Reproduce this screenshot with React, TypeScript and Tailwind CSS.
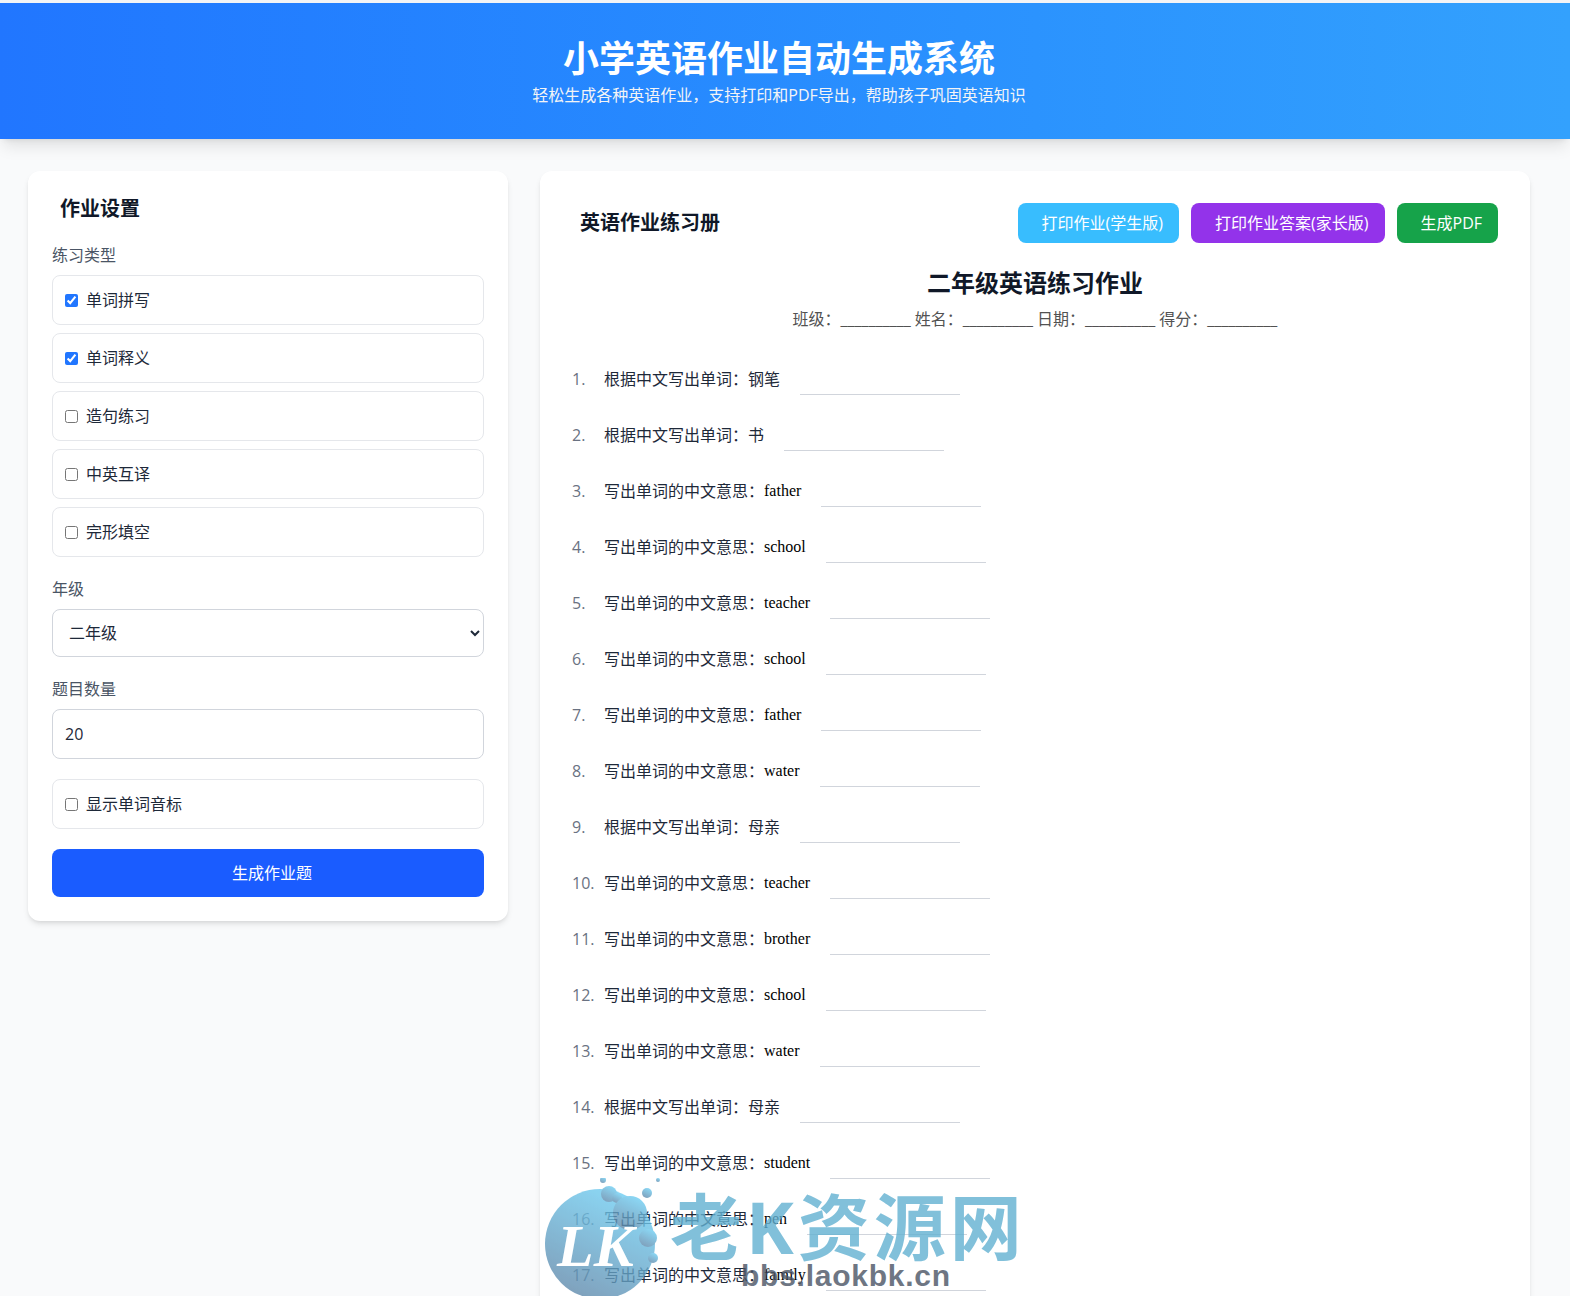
const font = { fontFamily: '"Open Sans", "Noto Sans CJK SC", sans-serif' };

const types = [
  { name: "单词拼写", checked: true },
  { name: "单词释义", checked: true },
  { name: "造句练习", checked: false },
  { name: "中英互译", checked: false },
  { name: "完形填空", checked: false },
];

const questions: { prompt: string; word: string; en: boolean }[] = [
  { prompt: "根据中文写出单词：", word: "钢笔", en: false },
  { prompt: "根据中文写出单词：", word: "书", en: false },
  { prompt: "写出单词的中文意思：", word: "father", en: true },
  { prompt: "写出单词的中文意思：", word: "school", en: true },
  { prompt: "写出单词的中文意思：", word: "teacher", en: true },
  { prompt: "写出单词的中文意思：", word: "school", en: true },
  { prompt: "写出单词的中文意思：", word: "father", en: true },
  { prompt: "写出单词的中文意思：", word: "water", en: true },
  { prompt: "根据中文写出单词：", word: "母亲", en: false },
  { prompt: "写出单词的中文意思：", word: "teacher", en: true },
  { prompt: "写出单词的中文意思：", word: "brother", en: true },
  { prompt: "写出单词的中文意思：", word: "school", en: true },
  { prompt: "写出单词的中文意思：", word: "water", en: true },
  { prompt: "根据中文写出单词：", word: "母亲", en: false },
  { prompt: "写出单词的中文意思：", word: "student", en: true },
  { prompt: "写出单词的中文意思：", word: "pen", en: true },
  { prompt: "写出单词的中文意思：", word: "family", en: true },
];

function CheckRow({ name, checked }: { name: string; checked: boolean }) {
  return (
    <label className="flex items-center gap-2 rounded-lg border border-gray-200 bg-white px-3 py-3 text-gray-800">
      <input type="checkbox" defaultChecked={checked} className="accent-[#2176ff]" />
      {name}
    </label>
  );
}

function SettingsPanel() {
  return (
    <aside className="w-120 shrink-0 self-start rounded-xl bg-white p-6 shadow-md">
      <h2 className="mb-5 ml-2 text-xl font-bold text-gray-900">作业设置</h2>

      <p className="mb-2 text-gray-600">练习类型</p>
      <div className="flex flex-col gap-2">
        {types.map((t) => (
          <CheckRow key={t.name} name={t.name} checked={t.checked} />
        ))}
      </div>

      <p className="mt-5 mb-2 text-gray-600">年级</p>
      <select
        defaultValue="二年级"
        className="h-12 w-full rounded-lg border border-gray-300 bg-white px-3 text-gray-800"
      >
        <option>一年级</option>
        <option>二年级</option>
        <option>三年级</option>
      </select>

      <p className="mt-5 mb-2 text-gray-600">题目数量</p>
      <input
        type="number"
        defaultValue={20}
        className="w-full rounded-lg border border-gray-300 px-3 py-3 text-gray-800"
      />

      <div className="mt-5">
        <CheckRow name="显示单词音标" checked={false} />
      </div>

      <button className="mt-5 w-full rounded-lg bg-[#1a5cff] py-3 pl-2 text-white">
        生成作业题
      </button>
    </aside>
  );
}

function Question({ index, prompt, word, en }: { index: number; prompt: string; word: string; en: boolean }) {
  return (
    <li className="flex h-14 items-start py-4">
      <span className="w-8 text-gray-500">{index}.</span>
      <span className="text-gray-800">{prompt}</span>
      <span
        className={en ? "text-black" : "text-gray-800"}
        style={en ? { fontFamily: '"Liberation Serif", serif' } : undefined}
      >
        {word}
      </span>
      <span className="ml-5 h-7 w-40 border-b border-gray-300" />
    </li>
  );
}

function WorkbookPanel() {
  return (
    <section className="min-w-0 flex-1 rounded-xl bg-white p-8 shadow-md">
      <div className="flex items-center justify-between">
        <h2 className="ml-2 text-xl font-bold text-gray-900">英语作业练习册</h2>
        <div className="flex gap-3">
          <button className="h-10 rounded-lg bg-[#38bdfe] pr-4 pl-6 text-white">打印作业(学生版)</button>
          <button className="h-10 rounded-lg bg-[#9333ea] pr-4 pl-6 text-white">打印作业答案(家长版)</button>
          <button className="h-10 rounded-lg bg-[#16a34a] pr-4 pl-6 text-white">生成PDF</button>
        </div>
      </div>

      <h3 className="mt-6 text-center text-2xl font-bold text-gray-900">二年级英语练习作业</h3>
      <p className="mt-2 text-center text-neutral-600">
        班级：__________ 姓名：__________ 日期：__________ 得分：__________
      </p>

      <ol className="mt-5">
        {questions.map((q, i) => (
          <Question key={i} index={i + 1} prompt={q.prompt} word={q.word} en={q.en} />
        ))}
      </ol>
    </section>
  );
}

function Watermark() {
  return (
    <div className="pointer-events-none absolute top-[1175px] left-[545px] h-[121px] w-[490px] overflow-hidden opacity-80">
      <svg viewBox="0 0 120 121" className="absolute top-0 left-0 h-[121px] w-[120px]">
        <defs>
          <linearGradient id="lk" x1="0.7" y1="0" x2="0.2" y2="1">
            <stop offset="0" stopColor="#6fd0f5" />
            <stop offset="1" stopColor="#5f86a8" />
          </linearGradient>
        </defs>
        <g fill="url(#lk)">
          <circle cx="55" cy="66" r="55" />
          <circle cx="64" cy="16" r="8" />
          <circle cx="72" cy="20" r="5" />
          <circle cx="102" cy="15" r="5" />
          <circle cx="58" cy="2" r="3" />
          <circle cx="113" cy="2" r="2" />
          <circle cx="85" cy="35" r="17" />
          <circle cx="103" cy="60" r="9" />
          <circle cx="108" cy="80" r="5" />
        </g>
        <text
          x="12"
          y="88"
          fill="#fff"
          fontSize="60"
          fontWeight="700"
          fontStyle="italic"
          fontFamily='"Liberation Serif", serif'
        >
          LK
        </text>
      </svg>
      <div className="absolute top-0 left-[125px] flex h-24 items-center gap-1 text-7xl leading-none font-bold whitespace-nowrap text-[#62b1d2]">
        <span>老</span>
        <span>K</span>
        <span>资</span>
        <span>源</span>
        <span>网</span>
      </div>
      <div
        className="absolute top-[80px] left-[196px] text-3xl font-bold tracking-wide text-gray-600"
        style={{ fontFamily: '"Liberation Sans", sans-serif' }}
      >
        bbs.laokbk.cn
      </div>
    </div>
  );
}

export default function App() {
  return (
    <div className="relative h-screen overflow-hidden border-t-3 border-gray-100 bg-gray-50" style={font}>
      <header className="bg-linear-to-r from-[#2176ff] to-[#33a1fd] pt-9 pr-3 pb-8 text-center text-white shadow-lg">
        <h1 className="text-4xl font-bold">小学英语作业自动生成系统</h1>
        <p className="mt-1 text-gray-100">轻松生成各种英语作业，支持打印和PDF导出，帮助孩子巩固英语知识</p>
      </header>

      <main className="flex items-start gap-8 pt-8 pr-10 pl-7">
        <SettingsPanel />
        <WorkbookPanel />
      </main>

      <Watermark />
    </div>
  );
}
